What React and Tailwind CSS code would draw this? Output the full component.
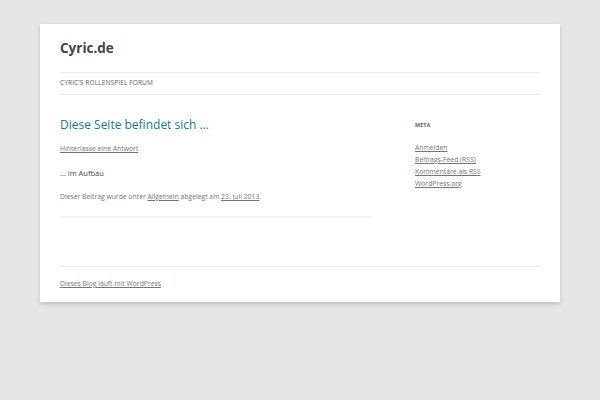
import React from "react";

export default function App() {
  const font = { fontFamily: '"Open Sans", "Liberation Sans", sans-serif' };
  return (
    <div className="min-h-[400px] w-[600px] bg-[#e6e6e6] pt-[24px]" style={font}>
      <div className="mx-[40px] w-[520px] bg-white px-[20px] shadow-[0_2px_4px_rgba(100,100,100,0.3)]">
        <header className="pt-[14px]">
          <h1 className="text-[13.5px] leading-[20px] font-bold text-[#444]">Cyric.de</h1>
          <nav className="mt-[14px] h-[23px] border-y border-[#ededed] flex items-center">
            <span className="text-[6.5px] uppercase text-[#5e5e5e] leading-none tracking-[0.02em]">Cyric's Rollenspiel Forum</span>
          </nav>
        </header>
        <div className="flex justify-between">
          <main className="w-[312px] pt-[21px]">
            <h2 className="text-[12px] leading-[18px] text-[#21759b]">Diese Seite befindet sich …</h2>
            <div className="mt-[10px] text-[6.8px] leading-[10px] text-[#757575] underline">Hinterlasse eine Antwort</div>
            <p className="mt-[13px] text-[7.5px] leading-[12px] text-[#444]">… im Aufbau</p>
            <p className="mt-[13px] text-[6.8px] leading-[10px] text-[#757575]">
              Dieser Beitrag wurde unter <span className="underline">Allgemein</span> abgelegt am <span className="underline">23. Juli 2013</span>.
            </p>
            <div className="mt-[14px] border-b-2 border-[#f2f2f2]"></div>
          </main>
          <aside className="w-[125px] pt-[25px]">
            <h3 className="text-[5.5px] leading-[10px] font-bold uppercase text-[#636363]">Meta</h3>
            <ul className="mt-[12px] text-[6.8px] leading-[12px] text-[#757575]">
              <li className="underline">Anmelden</li>
              <li className="underline">Beitrags-Feed (RSS)</li>
              <li className="underline">Kommentare als RSS</li>
              <li className="underline">WordPress.org</li>
            </ul>
          </aside>
        </div>
        <footer className="mt-[48px] border-t border-[#ededed] pt-[12px] pb-[13px]">
          <div className="text-[6.8px] leading-[10px] text-[#757575] underline">Dieses Blog läuft mit WordPress</div>
        </footer>
      </div>
    </div>
  );
}
